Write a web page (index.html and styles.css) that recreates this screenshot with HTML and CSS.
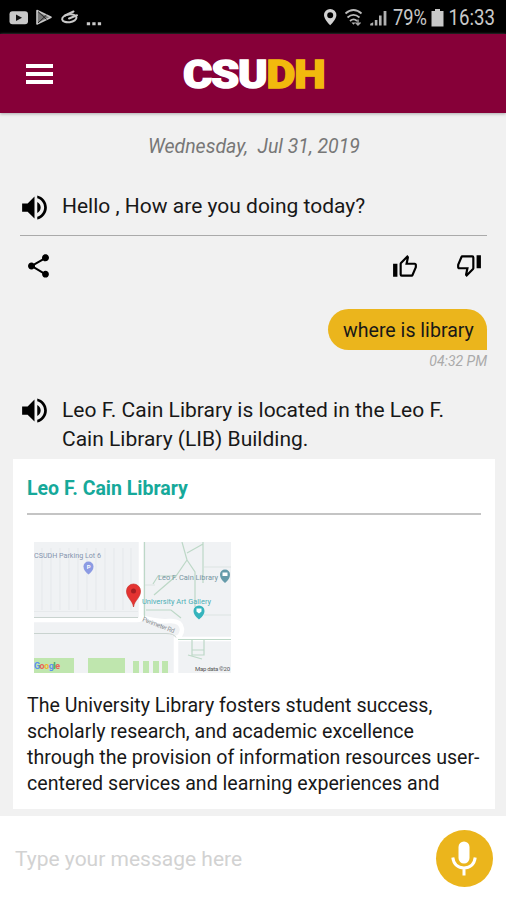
FILE: index.html
```html
<!DOCTYPE html>
<html lang="en">
<head>
<meta charset="utf-8">
<title>CSUDH</title>
<link rel="stylesheet" href="styles.css">
</head>
<body>
<svg width="0" height="0" class="defs">
  <symbol id="speaker" viewBox="0 0 24 24"><path d="M3 9v6h4l5 5V4L7 9H3zm13.5 3c0-1.77-1.02-3.29-2.5-4.03v8.05c1.480-.73 2.500-2.250 2.500-4.020zM14 3.230v2.060c2.890.860 5 3.540 5 6.710s-2.110 5.850-5 6.710v2.060c4.010-.910 7-4.490 7-8.770s-2.990-7.860-7-8.770z"/></symbol>
  <symbol id="thumb" viewBox="0 0 24 24"><path d="M5 9V21H1V9H5M9 21A2 2 0 0 1 7 19V9C7 8.450 7.220 7.950 7.590 7.590L14.170 1L15.230 2.060C15.500 2.330 15.670 2.700 15.670 3.110L15.640 3.430L14.690 8H21C22.110 8 23 8.900 23 10V12C23 12.260 22.950 12.500 22.860 12.730L19.840 19.780C19.540 20.500 18.830 21 18 21H9M9 19H18.030L21 12V10H12.210L13.340 4.680L9 9.030V19Z"/></symbol>
</svg>
<div class="phone">
  <div class="status">
    <svg class="status-left" width="110" height="34" viewBox="0 0 110 34">
      <rect x="9.5" y="11.3" width="18.5" height="13" rx="3" fill="#c9c9c9"/>
      <path d="M16 14.6v6.4l6-3.2z" fill="#111"/>
      <path d="M37 10.5v13.5l14-6.8z" fill="#777" stroke="#c9c9c9" stroke-width="1.6" stroke-linejoin="round"/>
      <path d="M38 11.500l8.500 8M38 23l8.500-8" stroke="#222" stroke-width="1"/>
      <ellipse cx="69.3" cy="18.3" rx="7.2" ry="3.9" transform="rotate(-8 69.3 18.3)" fill="none" stroke="#c9c9c9" stroke-width="2"/>
      <path d="M65 15.5l8.5-4M69 18.5l8-3.2" stroke="#c9c9c9" stroke-width="2" stroke-linecap="round"/>
      <path d="M86.8 22.3h3.3v3h-3.3zM92.3 22.3h3.3v3h-3.3zM97.8 22.3h3.3v3h-3.3z" fill="#c9c9c9"/>
    </svg>
    <div class="status-right">
      <svg width="66" height="34" viewBox="322 0 66 34">
        <path fill-rule="evenodd" d="M330.2 9a6.2 6.2 0 0 0-6.2 6.3c0 4 6.2 10 6.2 10s6.2-6 6.2-10A6.2 6.2 0 0 0 330.2 9zm0 3.3a3 3 0 1 1 0 6 3 3 0 0 1 0-6z" fill="#d2d2d2"/>
        <path d="M345.500 13.500q8-7 16 0M347.500 17.500q6-5.200 12 0M350 21q3.600-3.200 7 0" fill="none" stroke="#bbb" stroke-width="1.8"/>
        <path d="M351.500 22.500l2 2.300 2-2.300z" fill="#bbb"/>
        <path d="M358 19.500v5.500M355.500 22.500l2.500 2.500 2.500-2.500" fill="none" stroke="#aaa" stroke-width="1.400"/>
        <path d="M370.2 25.6v-1.800l3-1.600v3.400zM374.800 20h2.600v5.600h-2.600zM379 15.500h2.600v10.100H379zM383.600 11h2.800v14.600h-2.800z" fill="#b0b0b0"/>
      </svg>
      <svg width="118" height="34" viewBox="388 0 118 34" fill="#c8c8c8" font-size="22">
        <text x="393" y="25.300" textLength="34" lengthAdjust="spacingAndGlyphs">79%</text>
        <path d="M435 9h5v2h3.500v15.500H431.500V11h3.500z"/>
        <text x="448.500" y="25.300" textLength="46.500" lengthAdjust="spacingAndGlyphs">16:33</text>
      </svg>
    </div>
  </div>
  <header class="bar">
    <div class="menu"><i></i><i></i><i></i></div>
    <div class="logo">CSU<b>DH</b></div>
  </header>
  <main class="chat">
    <div class="date">Wednesday,&nbsp; Jul 31, 2019</div>
    <div class="bot first">
      <svg class="speaker"><use href="#speaker"/></svg>
      <p>Hello , How are you doing today?</p>
    </div>
    <div class="actions">
      <svg class="share" viewBox="0 0 24 24"><path d="M18 16.08c-.76 0-1.44.3-1.96.77L8.91 12.7c.05-.23.09-.46.09-.7s-.04-.47-.09-.7l7.05-4.11c.54.5 1.25.81 2.04.81 1.66 0 3-1.34 3-3s-1.34-3-3-3-3 1.34-3 3c0 .24.04.47.09.7L8.04 9.81C7.5 9.31 6.79 9 6 9c-1.66 0-3 1.34-3 3s1.34 3 3 3c.79 0 1.5-.31 2.04-.81l7.12 4.16c-.05.21-.08.43-.08.65 0 1.61 1.31 2.92 2.92 2.92s2.92-1.31 2.92-2.92-1.31-2.92-2.92-2.92z"/></svg>
      <svg class="thumb"><use href="#thumb"/></svg>
      <svg class="thumb down"><use href="#thumb"/></svg>
    </div>
    <div class="user">
      <div class="bubble"><span>where is library</span></div>
      <div class="time">04:32 PM</div>
    </div>
    <div class="bot second">
      <svg class="speaker"><use href="#speaker"/></svg>
      <p>Leo F. Cain Library is located in the Leo F.<br>Cain Library (LIB) Building.</p>
    </div>
    <section class="card">
      <h2>Leo F. Cain Library</h2>
      <svg class="map" width="197" height="131" viewBox="34 542 197 131" font-family="Roboto, sans-serif">
        <path fill="#f0f2f4" d="M34 542h197v131H34z"/>
        <path d="M42 548v62M51 548v62M60 548v62M69 548v62M78 548v62M87 548v62M96 548v62M105 548v62M114 548v62M123 548v62M131 548v62" stroke="#e5e8eb"/>
        <path d="M34 611.500h104" stroke="#e7eaec" fill="none"/>
        <path d="M141 542v75q0 3-4 3H34M141 617q15 5 28 4 12-1 13 8 0 7-6 9v35M178 639h53" stroke="#fff" stroke-width="4.500" fill="none"/>
        <path d="M34 617.500h104M34 633.500h132q8 0 10 4" stroke="#c9d3cf" fill="none"/>
        <path d="M144.5 542v75M182 542l5 18-11 16-22 19M187 560l8 12v35M187 553l16-9M203 542v41M146 610h25l10 8M153 584l5-8h17M178 639.500h53M192 639v16h12v-16M192 650h12M188 655l14 4" fill="none" stroke="#bdd8c7" stroke-width="1.2"/>
        <path d="M145 585h10M204 567h27M204 615h27" stroke="#dce4e2"/>
        <path d="M34 658h40v15H34zM88 658h37v15H88zM133 661h6v12h-6zM143 661h6v12h-6zM153 661h6v12h-6zM162 661h6v12h-6z" fill="#bfe6ae"/>
        <g font-size="7.500">
          <text x="34" y="558" textLength="67" lengthAdjust="spacingAndGlyphs" fill="#8594ae">CSUDH Parking Lot 6</text>
          <text x="158" y="579.500" textLength="60" lengthAdjust="spacingAndGlyphs" fill="#7595a1">Leo F. Cain Library</text>
          <text x="142" y="604" textLength="69" lengthAdjust="spacingAndGlyphs" fill="#4caeb5">University Art Gallery</text>
          <text x="142" y="621" transform="rotate(21 142 621)" font-size="6.500" textLength="34" fill="#8b9195">Perimeter Rd</text>
          <text x="195" y="670.500" font-size="6" textLength="35" fill="#555">Map data ©20</text>
        </g>
        <path d="M88.500 574.500q-5-4-5-8a5 5 0 0 1 10 0q0 4-5 8z" fill="#8c9be3"/>
        <text x="86.800" y="569" font-size="6" font-weight="700" fill="#fff">P</text>
        <path d="M225 583q-5-4-5-8.500a5 5 0 0 1 10 0q0 4.500-5 8.500z" fill="#659baa"/>
        <path d="M222.500 572.500h5v3.500h-5z" fill="#fff"/>
        <path d="M199 619.500q-5.500-4-5.500-8.500a5.500 5.500 0 0 1 11 0q0 4.500-5.500 8.500z" fill="#36b4bd"/>
        <path d="M196.500 608.500h5v3l-2.500 2-2.500-2z" fill="#fff"/>
        <path d="M133.500 607c-1-7-7-9-7-16a7 7 0 0 1 14 0c0 7-6 9-7 16z" fill="#e43331" stroke="#c9302d" stroke-width=".7"/>
        <circle cx="133.500" cy="591" r="2.500" fill="#a51f22"/>
        <text x="34" y="669" font-size="9" font-weight="700" textLength="26"><tspan fill="#5b8ff0">G</tspan><tspan fill="#ea6259">o</tspan><tspan fill="#efb52e">o</tspan><tspan fill="#5b8ff0">g</tspan><tspan fill="#45ac65">l</tspan><tspan fill="#ea6259">e</tspan></text>
      </svg>
      <p class="desc">The University Library fosters student success,<br>scholarly research, and academic excellence<br>through the provision of information resources user-<br>centered services and learning experiences and</p>
    </section>
  </main>
  <footer class="composer">
    <span class="placeholder">Type your message here</span>
    <div class="mic">
      <svg width="56" height="56" viewBox="0 0 56 56"><rect x="22.500" y="11.500" width="11" height="22" rx="5.500" fill="#fff"/><path d="M16.800 27.500c.8 7 5.500 10.500 11.200 10.500s10.400-3.500 11.200-10.500M28 38v7.500" fill="none" stroke="#fff" stroke-width="3"/></svg>
    </div>
  </footer>
</div>
</body>
</html>
```

FILE: styles.css
```css
* { box-sizing: border-box; }
body { margin: 0; font-family: Roboto, "Liberation Sans", sans-serif; color: #181818; }
p, h2 { margin: 0; }
svg { display: block; flex: none; }
.defs { position: absolute; }
.phone { width: 506px; height: 900px; display: flex; flex-direction: column; overflow: hidden; background: #f1f1f1; }
.status { height: 34px; flex: none; background: #000; display: flex; justify-content: space-between; }
.status-right { display: flex; width: 184px; }
.bar { height: 79px; flex: none; background: #860038; display: flex; align-items: center; box-shadow: 0 1px 3px #aaa; }
.menu { width: 27px; margin-left: 26px; height: 20px; display: flex; flex-direction: column; justify-content: space-between; }
.menu i { height: 4px; background: #fff; }
.logo { margin-left: 130px; padding-top: 2px; font-size: 39.5px; line-height: 1; font-weight: 900; letter-spacing: -1px; color: #fff; white-space: nowrap; -webkit-text-stroke: 1.4px currentColor; transform: scaleX(1.13); transform-origin: left; }
.logo b { font-weight: 900; color: #f2b90d; }
.chat { height: 703px; flex: none; white-space: nowrap; }
.date { padding: 21px 0 0 148px; height: 78px; font-size: 19.5px; line-height: 25px; font-style: italic; color: #777; }
.bot { display: flex; padding-left: 18px; font-size: 21px; line-height: 29px; }
.speaker { width: 33px; height: 33px; margin-right: 11px; }
.first { height: 45px; margin: 0 19px 0 20px; padding-left: 0; border-bottom: 1px solid #aaa; }
.first .speaker { margin-left: -2px; }
.first p { padding-top: 1px; }
.actions { height: 74px; display: flex; padding: 17px 24px 0 24px; }
.share { width: 29px; height: 28px; margin: -1px auto 0 0; }
.thumb { width: 26px; height: 26px; margin-top: 1px; }
.down { transform: rotate(180deg); margin: -1px 0 0 38px; }
.user { height: 84px; padding-right: 19px; display: flex; flex-direction: column; align-items: flex-end; }
.bubble { width: 159px; height: 41px; margin-top: -1px; border-radius: 21px 21px 0 21px; background: #ebb51c; padding-left: 15px; font-size: 19.6px; line-height: 43px; }
.time { margin-top: 3px; font-size: 14px; line-height: 16px; font-style: italic; color: #aaa; }
.second { height: 65px; }
.second p { padding-top: 2px; }
.card { width: 482px; height: 350px; margin-left: 13px; padding: 0 14px; background: #fff; }
.card h2 { height: 56px; border-bottom: 2px solid #c4c4c4; font-size: 19.5px; line-height: 59px; font-weight: 700; color: #16a99a; }
.map { margin: 27px 0 0 7px; }
.desc { margin-top: 20px; font-size: 19.6px; line-height: 26px; }
.composer { height: 84px; flex: none; background: #fff; display: flex; align-items: center; justify-content: space-between; padding: 1px 13px 0 15px; }
.placeholder { font-size: 21px; color: #d2d2d2; }
.mic { width: 57px; height: 57px; border-radius: 50%; background: #ebb51c; }
```
